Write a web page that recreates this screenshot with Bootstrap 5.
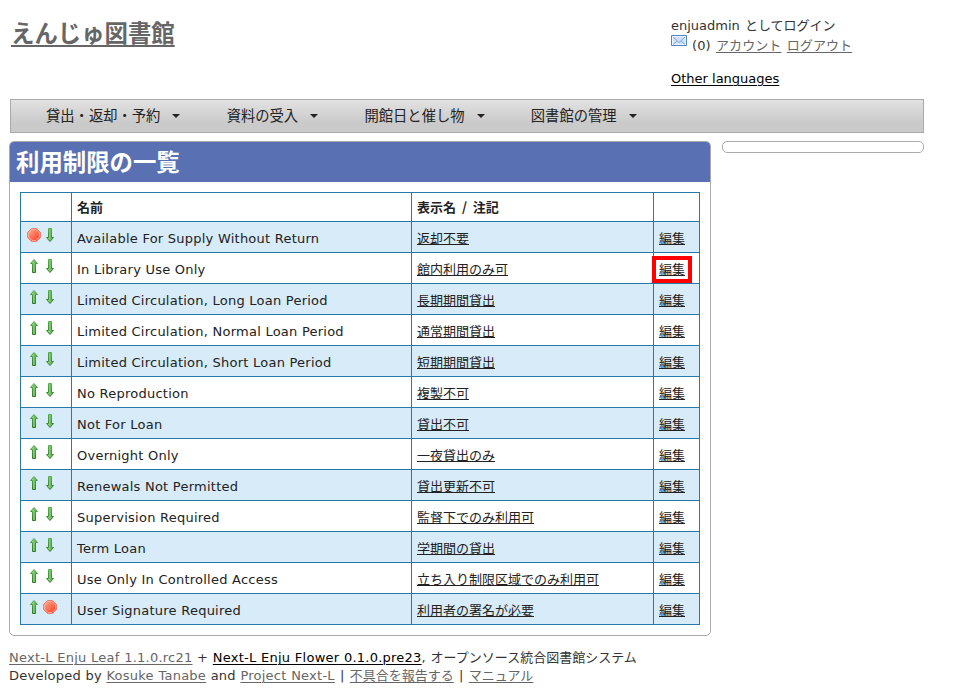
<!DOCTYPE html>
<html lang="ja">
<head>
<meta charset="utf-8">
<title>利用制限の一覧</title>
<meta name="viewport" content="width=device-width, initial-scale=1">
<link href="https://cdn.jsdelivr.net/npm/bootstrap@5.3.0/dist/css/bootstrap.min.css" rel="stylesheet">
<style>
body { font: 13px/18px "DejaVu Sans", "Noto Sans CJK JP", sans-serif; color: #333; background: #fff; overflow: hidden; }
a { color: #666; text-decoration: underline; text-underline-offset: 2px; text-decoration-thickness: 1px; }
.page { width: 915px; margin-left: 9px; }
.site-head { height: 99px; }
.site-title { font-size: 23.4px; line-height: 30px; font-weight: 700; margin: 19px 0 0 2px; }
.site-title a { text-decoration-thickness: 2px; text-underline-offset: 3px; }
.account { width: 253px; padding-top: 17px; }
.account .mail { margin-bottom: 15px; }
.mail-text { padding-top: 2px; margin-left: 1px; letter-spacing: .1px; word-spacing: 1px; }
.account .user { word-spacing: 1px; }
.dark-link { color: #000; }
.menu-bar { height: 34px; margin-left: 1px; padding: 0 0 0 35px; border: 1px solid #aaa; background: linear-gradient(#e2e2e2, #cacaca 70%, #cacaca); font-size: 14.3px; gap: 46.3px; }
.menu-bar .nav-link { color: #222; padding: 0; line-height: 32px; white-space: nowrap; }
.menu-bar .nav-link::after { margin-left: 12px; vertical-align: 3px; border-width: 4px 4px 0; }
.panels { margin-top: 8px; gap: 11px; }
.main-panel { width: 702px; height: 495px; border: 1px solid #aaa; border-radius: 5px; overflow: hidden; }
.main-panel h1 { height: 40px; line-height: 42px; margin: 0 0 10px; padding-left: 6px; background: #5970b2; color: #fff; font-size: 23.4px; font-weight: 700; }
.side-panel { width: 202px; height: 12px; border: 1px solid #aaa; border-radius: 5px; }
.rules { table-layout: fixed; width: 680px; margin-left: 10px; border-collapse: collapse; color: #222; }
.rules th, .rules td { border: 1px solid #2779aa; padding: 4px 5px 0; height: 31px; vertical-align: middle; white-space: nowrap; }
.rules th { height: 29px; font-family: "Noto Sans CJK JP", sans-serif; padding-top: 0; }
.rules tbody tr:nth-child(odd) td { background: #d7ebf9; }
.rules td:nth-child(2) { letter-spacing: .24px; }
.rules td a { color: #222; text-underline-offset: 1px; }
.rules td.order { padding: 0 0 4px 5px; }
.rules svg { display: block; }
.callout { position: absolute; left: -7px; top: -5px; width: 40px; height: 27px; border: 4px solid #f00; }
.site-foot { margin-top: 13px; letter-spacing: .24px; word-spacing: .2px; white-space: nowrap; }
.site-foot .jp { letter-spacing: 0; }
.site-foot .bar { margin: 0 .6px; }
</style>
</head>
<body>
<svg width="0" height="0" class="position-absolute" aria-hidden="true">
  <defs>
    <linearGradient id="green" x1="0" x2="1"><stop offset="0" stop-color="#b4dfaa"/><stop offset=".5" stop-color="#78c46c"/><stop offset="1" stop-color="#4fa547"/></linearGradient>
    <linearGradient id="edge" x1="0" y1="0" x2="0" y2="1"><stop offset="0" stop-color="#57ad4c"/><stop offset="1" stop-color="#327a2b"/></linearGradient>
    <linearGradient id="red" x1="0" y1="0" x2="1" y2="1"><stop offset="0" stop-color="#ffb59b"/><stop offset=".6" stop-color="#ff6548"/><stop offset="1" stop-color="#f63a24"/></linearGradient>
    <symbol id="up" viewBox="0 0 16 16"><path d="M8 1.500 11.500 5.500H9.500V14.500H6.500V5.500H4.500Z" fill="url(#green)" stroke="url(#edge)"/></symbol>
    <symbol id="down" viewBox="0 0 16 16"><path d="M8 14.500 11.500 10.500H9.500V1.500H6.500V10.500H4.500Z" fill="url(#green)" stroke="url(#edge)"/></symbol>
    <symbol id="stop" viewBox="0 0 16 16"><path d="M5.500 1.500H10.500L14.500 5.500V10.500L10.500 14.500H5.500L1.500 10.500V5.500Z" fill="url(#red)" stroke="#ee7c70"/><path d="M6 2.500H10L13.500 6V10L10 13.500H6L2.500 10V6Z" fill="none" stroke="#ffc0ad" stroke-opacity=".7"/></symbol>
  </defs>
</svg>
<div class="page">
  <header class="site-head d-flex justify-content-between">
    <div class="site-title"><a href="#">えんじゅ図書館</a></div>
    <div class="account">
      <div class="user">enjuadmin としてログイン</div>
      <div class="mail d-flex align-items-start">
        <svg class="me-1" width="16" height="16" viewBox="0 0 16 16"><path d="M.5 .5H15.500V10.500H.5Z" fill="#cfe1f8" stroke="#4f83c8"/><path d="M1.500 1.500H14.500V9.500H1.500Z" fill="none" stroke="#f0f6ff"/><path d="M2 2 8 7.500 14 2M2 9.500 6 6M14 9.500 10 6" fill="none" stroke="#7fa8dc"/></svg>
        <div class="mail-text">(0) <a href="#">アカウント</a> <a href="#">ログアウト</a></div>
      </div>
      <div><a class="dark-link" href="#">Other languages</a></div>
    </div>
  </header>
  <nav class="menu-bar nav flex-nowrap">
    <a class="nav-link dropdown-toggle" href="#">貸出・返却・予約</a>
    <a class="nav-link dropdown-toggle" href="#">資料の受入</a>
    <a class="nav-link dropdown-toggle" href="#">開館日と催し物</a>
    <a class="nav-link dropdown-toggle" href="#">図書館の管理</a>
  </nav>
  <div class="panels d-flex align-items-start">
    <main class="main-panel">
      <h1>利用制限の一覧</h1>
      <table class="rules">
        <colgroup><col style="width:51px"><col style="width:340px"><col style="width:242px"><col style="width:46px"></colgroup>
        <thead><tr><th></th><th>名前</th><th>表示名&nbsp; /&nbsp; 注記</th><th></th></tr></thead>
        <tbody>
          <tr><td class="order"><div class="d-flex"><svg width="16" height="16"><use href="#stop"/></svg><svg width="16" height="16"><use href="#down"/></svg></div></td><td>Available For Supply Without Return</td><td><a href="#">返却不要</a></td><td><a href="#">編集</a></td></tr>
          <tr><td class="order"><div class="d-flex"><svg width="16" height="16"><use href="#up"/></svg><svg width="16" height="16"><use href="#down"/></svg></div></td><td>In Library Use Only</td><td><a href="#">館内利用のみ可</a></td><td><div class="position-relative"><a href="#">編集</a><span class="callout"></span></div></td></tr>
          <tr><td class="order"><div class="d-flex"><svg width="16" height="16"><use href="#up"/></svg><svg width="16" height="16"><use href="#down"/></svg></div></td><td>Limited Circulation, Long Loan Period</td><td><a href="#">長期期間貸出</a></td><td><a href="#">編集</a></td></tr>
          <tr><td class="order"><div class="d-flex"><svg width="16" height="16"><use href="#up"/></svg><svg width="16" height="16"><use href="#down"/></svg></div></td><td>Limited Circulation, Normal Loan Period</td><td><a href="#">通常期間貸出</a></td><td><a href="#">編集</a></td></tr>
          <tr><td class="order"><div class="d-flex"><svg width="16" height="16"><use href="#up"/></svg><svg width="16" height="16"><use href="#down"/></svg></div></td><td>Limited Circulation, Short Loan Period</td><td><a href="#">短期期間貸出</a></td><td><a href="#">編集</a></td></tr>
          <tr><td class="order"><div class="d-flex"><svg width="16" height="16"><use href="#up"/></svg><svg width="16" height="16"><use href="#down"/></svg></div></td><td>No Reproduction</td><td><a href="#">複製不可</a></td><td><a href="#">編集</a></td></tr>
          <tr><td class="order"><div class="d-flex"><svg width="16" height="16"><use href="#up"/></svg><svg width="16" height="16"><use href="#down"/></svg></div></td><td>Not For Loan</td><td><a href="#">貸出不可</a></td><td><a href="#">編集</a></td></tr>
          <tr><td class="order"><div class="d-flex"><svg width="16" height="16"><use href="#up"/></svg><svg width="16" height="16"><use href="#down"/></svg></div></td><td>Overnight Only</td><td><a href="#">一夜貸出のみ</a></td><td><a href="#">編集</a></td></tr>
          <tr><td class="order"><div class="d-flex"><svg width="16" height="16"><use href="#up"/></svg><svg width="16" height="16"><use href="#down"/></svg></div></td><td>Renewals Not Permitted</td><td><a href="#">貸出更新不可</a></td><td><a href="#">編集</a></td></tr>
          <tr><td class="order"><div class="d-flex"><svg width="16" height="16"><use href="#up"/></svg><svg width="16" height="16"><use href="#down"/></svg></div></td><td>Supervision Required</td><td><a href="#">監督下でのみ利用可</a></td><td><a href="#">編集</a></td></tr>
          <tr><td class="order"><div class="d-flex"><svg width="16" height="16"><use href="#up"/></svg><svg width="16" height="16"><use href="#down"/></svg></div></td><td>Term Loan</td><td><a href="#">学期間の貸出</a></td><td><a href="#">編集</a></td></tr>
          <tr><td class="order"><div class="d-flex"><svg width="16" height="16"><use href="#up"/></svg><svg width="16" height="16"><use href="#down"/></svg></div></td><td>Use Only In Controlled Access</td><td><a href="#">立ち入り制限区域でのみ利用可</a></td><td><a href="#">編集</a></td></tr>
          <tr><td class="order"><div class="d-flex"><svg width="16" height="16"><use href="#up"/></svg><svg width="16" height="16"><use href="#stop"/></svg></div></td><td>User Signature Required</td><td><a href="#">利用者の署名が必要</a></td><td><a href="#">編集</a></td></tr>
        </tbody>
      </table>
    </main>
    <aside class="side-panel"></aside>
  </div>
  <footer class="site-foot">
    <div><a href="#">Next-L Enju Leaf 1.1.0.rc21</a> + <a class="dark-link" href="#">Next-L Enju Flower 0.1.0.pre23</a>, <span class="jp">オープンソース統合図書館システム</span></div>
    <div>Developed by <a href="#">Kosuke Tanabe</a> and <a href="#">Project Next-L</a> <span class="bar">|</span> <a class="jp" href="#">不具合を報告する</a> <span class="bar">|</span> <a class="jp" href="#">マニュアル</a></div>
  </footer>
</div>
<script src="https://cdn.jsdelivr.net/npm/bootstrap@5.3.0/dist/js/bootstrap.bundle.min.js"></script>
</body>
</html>
